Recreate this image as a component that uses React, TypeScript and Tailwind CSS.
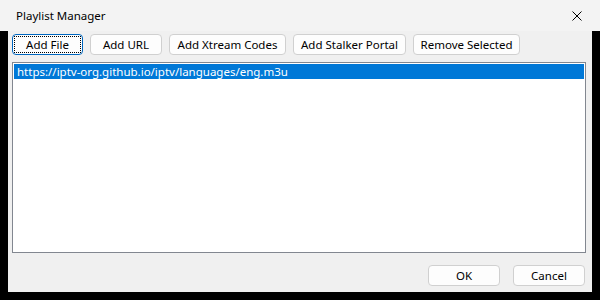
const TOOLBAR = [
  { label: 'Add File', width: 'w-[71px]', focused: true },
  { label: 'Add URL', width: 'w-[72px]' },
  { label: 'Add Xtream Codes', width: 'w-[117px]' },
  { label: 'Add Stalker Portal', width: 'w-[113px]' },
  { label: 'Remove Selected', width: 'w-[107px]' },
];

function WinButton({ label, width, focused }: { label: string; width: string; focused?: boolean }) {
  if (focused) {
    return (
      <button className={`${width} h-[21px] rounded-[4px] border border-[#0067c0] bg-[#fdfdfd] p-[1px] text-[11.5px] leading-none text-black`}>
        <span className="flex h-full w-full items-center justify-center border border-dotted border-black">
          {label}
        </span>
      </button>
    );
  }
  return (
    <button className={`${width} h-[21px] rounded-[4px] border border-[#d0d0d0] bg-[#fdfdfd] text-[11.5px] leading-none text-black`}>
      {label}
    </button>
  );
}

export default function App() {
  return (
    <div
      className="flex h-[300px] w-[600px] flex-col bg-black"
      style={{ fontFamily: '"Segoe UI", "Noto Sans", "Liberation Sans", sans-serif' }}
    >
      {/* Title bar */}
      <div className="flex h-[31px] shrink-0 items-center justify-between bg-[#f3f3f3] pl-[16px] pr-[18px]">
        <span className="text-[11.5px] text-black">Playlist Manager</span>
        <svg width="10" height="10" viewBox="0 0 10 10" className="text-black">
          <path d="M0.5 0.5 L9.5 9.5 M9.5 0.5 L0.5 9.5" stroke="currentColor" strokeWidth="1" fill="none" />
        </svg>
      </div>

      {/* Client area */}
      <div className="mx-[8px] flex h-[261px] flex-col bg-[#f0f0f0] pt-[3px] pl-[4px] pr-[6px]">
        <div className="flex gap-[7px]">
          {TOOLBAR.map((b) => (
            <WinButton key={b.label} {...b} />
          ))}
        </div>

        <div className="mt-[7px] h-[191px] border border-[#828790] bg-white p-[1px]">
          <div className="flex h-[15px] items-center bg-[#0078d7] pl-[3px] text-[11.5px] leading-none text-white">
            https://iptv-org.github.io/iptv/languages/eng.m3u
          </div>
        </div>

        <div className="mt-[12px] flex justify-end gap-[13px] pr-[1px]">
          <WinButton label="OK" width="w-[72px]" />
          <WinButton label="Cancel" width="w-[72px]" />
        </div>
      </div>
    </div>
  );
}
